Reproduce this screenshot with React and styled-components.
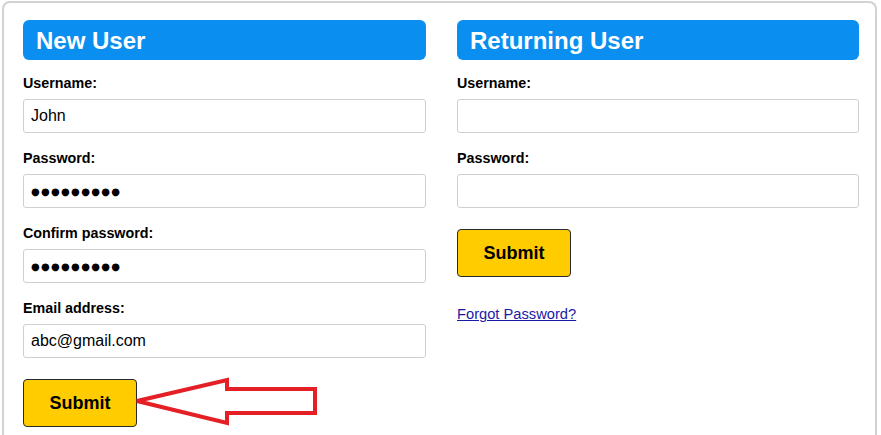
import styled, { createGlobalStyle } from 'styled-components'

const GlobalStyle = createGlobalStyle`
  body {
    margin: 0;
    background: #fff;
    font-family: "Liberation Sans", Arial, sans-serif;
  }
`

const Frame = styled.div`
  margin: 1px 4px 0 2px;
  border: 2px solid #d2d2d2;
  border-bottom: none;
  border-radius: 8px 8px 0 0;
  padding: 17px 17px 40px 19px;
  display: grid;
  grid-template-columns: 403px 402px;
  column-gap: 31px;
`

const Panel = styled.section`
  display: flex;
  flex-direction: column;
  align-items: flex-start;
`

const Header = styled.h2`
  align-self: stretch;
  margin: 0 0 15px;
  height: 40px;
  padding: 0 13px;
  background: #0a8eef;
  border-radius: 6px;
  color: #fff;
  font-size: 24px;
  font-weight: bold;
  line-height: 41px;
`

const Field = styled.div`
  align-self: stretch;
  display: flex;
  flex-direction: column;
  margin-bottom: 17px;
`

const Label = styled.label`
  font-size: 14.3px;
  font-weight: bold;
  line-height: 17px;
  color: #000;
  margin-bottom: 7px;
`

const Input = styled.input`
  box-sizing: border-box;
  height: 34px;
  padding: 0 7px;
  border: 1px solid #cfcfcf;
  border-radius: 3px;
  background: #fff;
  color: #000;
  font-family: ${({ $masked }) => ($masked ? '"DejaVu Sans", sans-serif' : '"Liberation Sans", Arial, sans-serif')};
  font-size: ${({ $masked }) => ($masked ? '10px' : '16px')};
  letter-spacing: ${({ $masked }) => ($masked ? '1.3px' : '0')};
  outline: none;
`

const ButtonRow = styled.div`
  position: relative;
  margin-top: 4px;
`

const SubmitButton = styled.button`
  box-sizing: border-box;
  width: 114px;
  height: 48px;
  background: #ffcc00;
  border: 1px solid #2a2a2a;
  border-radius: 4px;
  color: #000;
  font-family: "Liberation Sans", Arial, sans-serif;
  font-size: 18px;
  font-weight: bold;
  cursor: pointer;
`

const Arrow = styled.svg`
  position: absolute;
  left: 110px;
  top: -4px;
  overflow: visible;
`

const ForgotLink = styled.a`
  margin-top: 29px;
  font-size: 14.7px;
  line-height: 17px;
  color: #1a1aa6;
  text-decoration: underline;
`

const PointerArrow = () => (
  <Arrow width="190" height="54" viewBox="0 0 190 54">
    <polygon
      points="4,26 94,5 94,14 182,14 182,38 94,38 94,48"
      fill="none"
      stroke="#e41f26"
      strokeWidth="4"
      strokeLinejoin="miter"
    />
  </Arrow>
)

const TextField = ({ label, value = '', masked }) => (
  <Field>
    <Label>{label}</Label>
    <Input type="text" value={value} $masked={masked} readOnly />
  </Field>
)

const App = () => (
  <>
    <GlobalStyle />
    <Frame>
      <Panel>
        <Header>New User</Header>
        <TextField label="Username:" value="John" />
        <TextField label="Password:" value="●●●●●●●●●" masked />
        <TextField label="Confirm password:" value="●●●●●●●●●" masked />
        <TextField label="Email address:" value="abc@gmail.com" />
        <ButtonRow>
          <SubmitButton type="button">Submit</SubmitButton>
          <PointerArrow />
        </ButtonRow>
      </Panel>
      <Panel>
        <Header>Returning User</Header>
        <TextField label="Username:" />
        <TextField label="Password:" />
        <ButtonRow>
          <SubmitButton type="button">Submit</SubmitButton>
        </ButtonRow>
        <ForgotLink href="#">Forgot Password?</ForgotLink>
      </Panel>
    </Frame>
  </>
)

export default App
